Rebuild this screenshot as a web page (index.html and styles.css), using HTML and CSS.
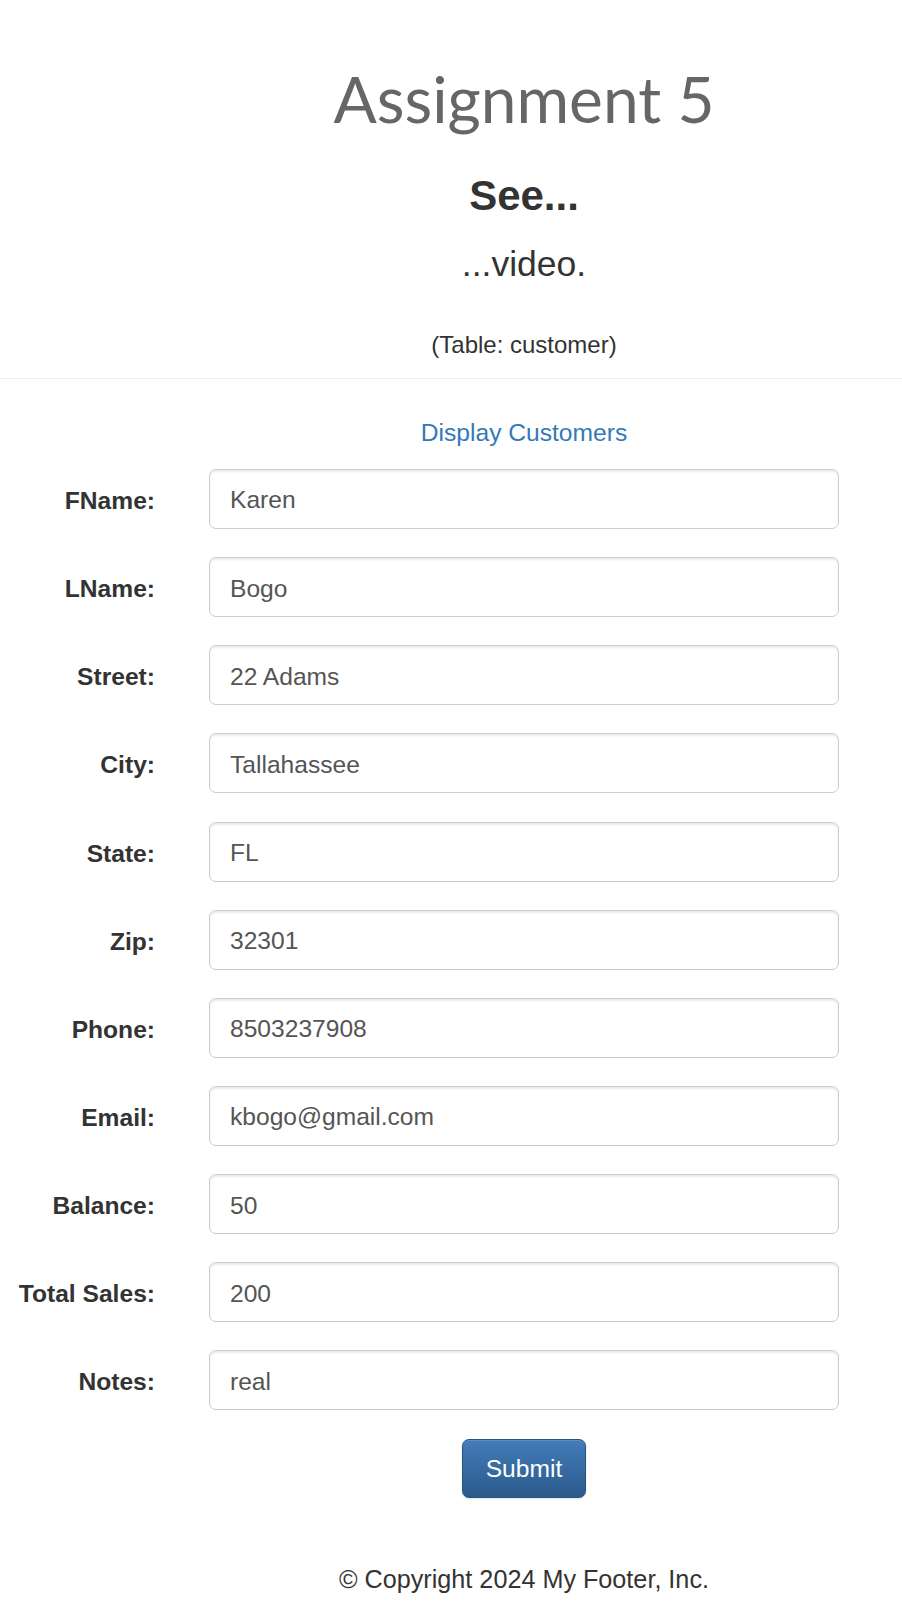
FILE: index.html
```html
<!DOCTYPE html>
<html lang="en">
<head>
<meta charset="utf-8">
<title>Assignment 5</title>
<link rel="stylesheet" href="styles.css">
</head>
<body>
<header class="intro">
  <div class="column">
    <h1 class="title">Assignment 5</h1>
    <h3 class="subtitle">See...</h3>
    <p class="lead">...video.</p>
    <p class="note">(Table: customer)</p>
  </div>
</header>
<hr class="rule">
<main class="content">
  <div class="link-row"><a href="#" class="link">Display Customers</a></div>
  <form class="form" action="#">
    <div class="field"><label class="label" for="fname">FName:</label><input class="control" id="fname" type="text" value="Karen"></div>
    <div class="field"><label class="label" for="lname">LName:</label><input class="control" id="lname" type="text" value="Bogo"></div>
    <div class="field"><label class="label" for="street">Street:</label><input class="control" id="street" type="text" value="22 Adams"></div>
    <div class="field"><label class="label" for="city">City:</label><input class="control" id="city" type="text" value="Tallahassee"></div>
    <div class="field"><label class="label" for="state">State:</label><input class="control" id="state" type="text" value="FL"></div>
    <div class="field"><label class="label" for="zip">Zip:</label><input class="control" id="zip" type="text" value="32301"></div>
    <div class="field"><label class="label" for="phone">Phone:</label><input class="control" id="phone" type="text" value="8503237908"></div>
    <div class="field"><label class="label" for="email">Email:</label><input class="control" id="email" type="text" value="kbogo@gmail.com"></div>
    <div class="field"><label class="label" for="balance">Balance:</label><input class="control" id="balance" type="text" value="50"></div>
    <div class="field"><label class="label" for="sales">Total Sales:</label><input class="control" id="sales" type="text" value="200"></div>
    <div class="field"><label class="label" for="notes">Notes:</label><input class="control" id="notes" type="text" value="real"></div>
    <div class="actions"><button type="submit" class="btn">Submit</button></div>
  </form>
</main>
<footer class="footer"><div class="column">© Copyright 2024 My Footer, Inc.</div></footer>
</body>
</html>
```

FILE: styles.css
```css
html, body {
  margin: 0;
  padding: 0;
  background: #fff;
}

body {
  font-family: "Liberation Sans", Arial, Helvetica, sans-serif;
  font-size: 24.6px;
  color: #333;
}

.column {
  margin-left: 209px;
  width: 630px;
  text-align: center;
}

.title {
  margin: 62.5px 0 0;
  font-family: Lato, "Open Sans", sans-serif;
  font-size: 64px;
  line-height: 72px;
  font-weight: 400;
  color: #666;
}

.subtitle {
  margin: 37px 0 0;
  font-size: 42px;
  line-height: 48px;
  font-weight: 700;
  color: #333;
}

.lead {
  margin: 23.7px 0 0;
  font-size: 35.5px;
  line-height: 42px;
  font-weight: 300;
}

.note {
  margin: 42.5px 0 0;
  font-size: 24px;
  line-height: 34px;
}

.rule {
  margin: 16.3px 0 0;
  border: 0;
  border-top: 1px solid #eee;
  height: 0;
}

.link-row {
  margin: 36.3px 0 0 209px;
  width: 630px;
  text-align: center;
  line-height: 35px;
}

.link {
  color: #337ab7;
  text-decoration: none;
}

.form {
  margin-top: 18.7px;
  display: flex;
  flex-direction: column;
  gap: 28.15px;
}

.field {
  display: grid;
  grid-template-columns: 155px 630px;
  column-gap: 54px;
}

.label {
  text-align: right;
  font-weight: 700;
  padding-top: 14px;
  line-height: 35px;
}

.control {
  box-sizing: border-box;
  width: 100%;
  height: 60px;
  margin: 0;
  padding: 3px 20px 0;
  border: 1px solid #ccc;
  border-radius: 7px;
  font-family: inherit;
  font-size: 24.6px;
  color: #555;
  background: #fff;
  box-shadow: inset 0 2px 2px rgba(0, 0, 0, 0.075);
  outline: none;
}

.actions {
  margin: 0.6px 0 0 209px;
  width: 630px;
  display: flex;
  justify-content: center;
}

.btn {
  box-sizing: border-box;
  height: 59px;
  padding: 0 23px;
  border: 1px solid #245580;
  border-radius: 7px;
  background: linear-gradient(to bottom, #427cb8 0%, #2c5a8c 100%);
  color: #fff;
  font-family: inherit;
  font-size: 24.6px;
  box-shadow: inset 0 1px 0 rgba(255, 255, 255, 0.15), 0 1px 2px rgba(0, 0, 0, 0.12);
  cursor: pointer;
}

.footer {
  margin-top: 63.5px;
  font-size: 25.2px;
  line-height: 35px;
  color: #333;
}
```
